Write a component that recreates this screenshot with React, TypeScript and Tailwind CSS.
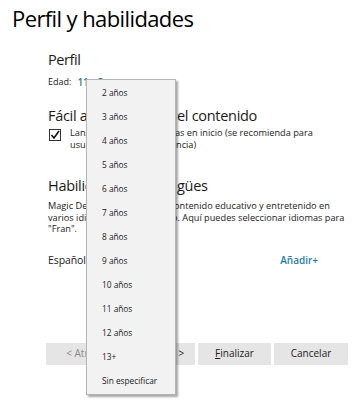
export default function App() {
  const items = [
    "2 años",
    "3 años",
    "4 años",
    "5 años",
    "6 años",
    "7 años",
    "8 años",
    "9 años",
    "10 años",
    "11 años",
    "12 años",
    "13+",
    "Sin especificar",
  ];
  return (
    <div className="relative w-[360px] h-[400px] bg-white overflow-hidden text-[#1a1a1a] font-['Open_Sans',sans-serif]">
      <h1 className="pl-[12px] mt-[3px] text-[22px] leading-[30px] font-normal text-black tracking-[-0.6px]">
        Perfil y habilidades
      </h1>
      <div className="pl-[48px] pr-[12px]">
        <div className="mt-[17px] text-[14.5px] leading-[20px] tracking-[-0.4px]">Perfil</div>
        <div className="mt-[6px] text-[9px] leading-[12px] flex gap-[6px]">
          <span>Edad:</span>
          <span className="text-[#2a7fa0] font-semibold text-[10px]">11 años ▾</span>
        </div>
        <div className="mt-[18px] text-[14.5px] leading-[20px] tracking-[-0.3px] flex whitespace-nowrap">
          <span className="inline-block w-[129px] overflow-hidden">Fácil acceso y uso d</span>
          <span>el contenido</span>
        </div>
        <div className="mt-[1px] flex items-start gap-[9px]">
          <div className="mt-[2px] ml-[1px] w-[12px] h-[12px] border border-[#333] flex items-center justify-center shrink-0">
            <svg width="10" height="10" viewBox="0 0 10 10">
              <path d="M1.5 5 L4 8 L9 1" fill="none" stroke="#111" strokeWidth="1.6" />
            </svg>
          </div>
          <div className="text-[9.2px] leading-[11.5px] whitespace-nowrap">
            <div className="flex">
              <span className="inline-block w-[105px] overflow-hidden">Lanzar aplicaciones favorit</span>
              <span>as en inicio (se recomienda para</span>
            </div>
            <div className="flex">
              <span className="inline-block w-[106px] overflow-hidden">usuarios con poca experie</span>
              <span>ncia)</span>
            </div>
          </div>
        </div>
        <div className="mt-[26px] text-[14.5px] leading-[20px] tracking-[-0.3px] flex whitespace-nowrap">
          <span className="inline-block w-[129px] overflow-hidden">Habilidades bilin</span>
          <span>gües</span>
        </div>
        <div className="mt-[4px] text-[9.2px] leading-[11.5px] whitespace-nowrap">
          <div className="flex">
            <span className="inline-block w-[126px] overflow-hidden">Magic Desktop ofrece c</span>
            <span>ontenido educativo y entretenido en</span>
          </div>
          <div className="flex">
            <span className="inline-block w-[124px] overflow-hidden">varios idiomas de forma gratuit</span>
            <span>o. Aquí puedes seleccionar idiomas para</span>
          </div>
          <div>"Fran".</div>
        </div>
        <div className="mt-[17px] flex justify-between items-center leading-[16px] pr-[30px]">
          <span className="text-[10.5px] tracking-[-0.1px]">Español</span>
          <span className="text-[#1f7ea8] font-semibold text-[10px]">Añadir+</span>
        </div>
      </div>
      <div className="mt-[75px] pl-[46px] flex gap-[3px] text-[10px]">
        <div className="w-[73px] h-[22px] bg-[#e5e5e5] flex items-center justify-center text-[#8a8a8a]">&lt; Atrás</div>
        <div className="w-[73px] h-[22px] bg-[#e5e5e5] flex items-center justify-center">Siguiente &gt;</div>
        <div className="w-[73px] h-[22px] bg-[#e5e5e5] flex items-center justify-center">
          <span>
            <span className="underline">F</span>inalizar
          </span>
        </div>
        <div className="w-[74px] h-[22px] bg-[#e5e5e5] flex items-center justify-center">Cancelar</div>
      </div>

      <div className="absolute left-[86px] top-[79px] w-[90px] h-[316px] bg-[#f2f2f2] border border-[#b5b5b5] shadow-[2px_2px_2px_rgba(0,0,0,0.35)] pt-[1px]">
        {items.map((t) => (
          <div key={t} className="h-[24px] pl-[15px] flex items-center text-[8.3px] text-[#1a1a1a]">
            {t}
          </div>
        ))}
      </div>
    </div>
  );
}
